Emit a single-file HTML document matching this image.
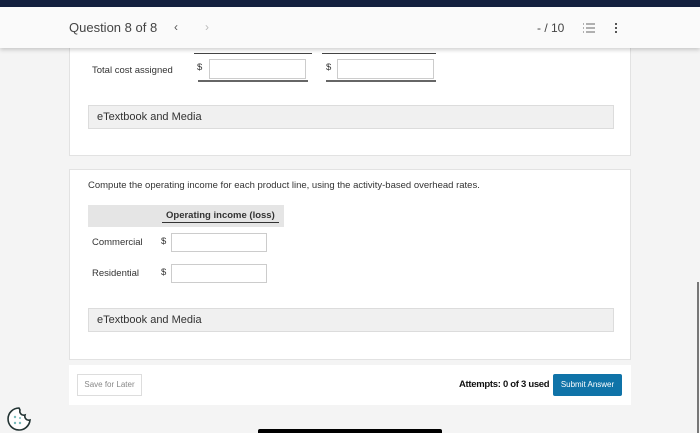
<!DOCTYPE html>
<html><head><style>
*{box-sizing:border-box;margin:0;padding:0}
body{width:700px;height:433px;overflow:hidden;background:#f4f4f4;font-family:"Liberation Sans",sans-serif;position:relative;color:#333}
.top{position:absolute;left:0;top:0;width:700px;height:7px;background:#14203f}
.hdr{position:absolute;left:0;top:7px;width:700px;height:41px;background:#fafafa;box-shadow:0 2px 4px rgba(0,0,0,.18);z-index:2}
.hdr .t{position:absolute;left:69px;top:13px;font-size:13px;color:#444}
.card{position:absolute;left:69px;width:562px;background:#fff;border:1px solid #e2e2e2}
.etb{position:absolute;left:18px;width:526px;height:24px;background:#f0f0f0;border:1px solid #dcdcdc;font-size:11px;padding:5px 8px;color:#333}
.inp{position:absolute;background:#fff;border:1px solid #ccc}
.lbl{position:absolute;font-size:9.5px;color:#333}
</style></head><body>
<div class="top"></div>
<div class="hdr">
<div class="t">Question 8 of 8</div>
<div style="position:absolute;left:174px;top:13px;font-size:12px;color:#555">‹</div>
<div style="position:absolute;left:205px;top:13px;font-size:12px;color:#bbb">›</div>
<div style="position:absolute;left:537px;top:14px;font-size:12px;color:#444">- / 10</div>
<svg style="position:absolute;left:583px;top:16px" width="12" height="10"><g stroke="#666" stroke-width="1"><line x1="0" y1="1" x2="1" y2="1"/><line x1="0" y1="5" x2="1" y2="5"/><line x1="0" y1="9" x2="1" y2="9"/><line x1="3" y1="1" x2="12" y2="1"/><line x1="3" y1="5" x2="12" y2="5"/><line x1="3" y1="9" x2="12" y2="9"/></g></svg>
<div style="position:absolute;left:615px;top:15px;width:2px;height:11px;background:radial-gradient(circle,#555 50%,transparent 55%) 0 0/2px 4px repeat-y"></div>
</div>
<div class="card" style="top:40px;height:116px">
<div style="position:absolute;left:124px;top:12px;width:118px;height:1px;background:#444"></div>
<div style="position:absolute;left:252px;top:12px;width:114px;height:1px;background:#444"></div>
<div class="lbl" style="left:22px;top:24px">Total cost assigned</div>
<div class="lbl" style="left:127px;top:21px">$</div>
<div class="inp" style="left:139px;top:18px;width:97px;height:20px"></div>
<div style="position:absolute;left:128px;top:39px;width:110px;height:2px;background:#666"></div>
<div class="lbl" style="left:256px;top:21px">$</div>
<div class="inp" style="left:267px;top:18px;width:97px;height:20px"></div>
<div style="position:absolute;left:256px;top:39px;width:110px;height:2px;background:#666"></div>
<div class="etb" style="top:64px">eTextbook and Media</div>
</div>
<div class="card" style="top:169px;height:191px">
<div style="position:absolute;left:18px;top:10px;font-size:9.5px">Compute the operating income for each product line, using the activity-based overhead rates.</div>
<div style="position:absolute;left:18px;top:35px;width:196px;height:22px;background:#e5e5e5"></div>
<div style="position:absolute;left:92px;top:40px;font-size:9.5px;font-weight:bold;border-bottom:1px solid #333;padding:0 4px 1px 4px">Operating income (loss)</div>
<div class="lbl" style="left:22px;top:67px">Commercial</div>
<div class="lbl" style="left:91px;top:66px">$</div>
<div class="inp" style="left:101px;top:63px;width:96px;height:19px"></div>
<div class="lbl" style="left:22px;top:98px">Residential</div>
<div class="lbl" style="left:91px;top:97px">$</div>
<div class="inp" style="left:101px;top:94px;width:96px;height:19px"></div>
<div class="etb" style="top:138px">eTextbook and Media</div>
</div>
<div style="position:absolute;left:69px;top:365px;width:562px;height:40px;background:#fff"></div>
<div style="position:absolute;left:77px;top:374px;width:65px;height:22px;border:1px solid #ddd;background:#fff;font-size:8px;color:#888;text-align:center;line-height:20px">Save for Later</div>
<div style="position:absolute;left:459px;top:379px;font-size:9.5px;color:#111;font-weight:bold;letter-spacing:-0.3px">Attempts: 0 of 3 used</div>
<div style="position:absolute;left:553px;top:374px;width:69px;height:22px;background:#0f73a8;border-radius:2px;font-size:8px;color:#fff;text-align:center;line-height:22px">Submit Answer</div>
<svg style="position:absolute;left:6px;top:406px" width="26" height="26" viewBox="0 0 26 26"><path d="M13 2 A11 11 0 1 0 24 14 A4 4 0 0 1 19 9 A4 4 0 0 1 14 4 Z" fill="#fff" stroke="#233" stroke-width="1.6"/><circle cx="9" cy="11" r="1.2" fill="#7bb"/><circle cx="9" cy="17" r="1.2" fill="#7bb"/><circle cx="14" cy="17" r="1.2" fill="#7bb"/><circle cx="14" cy="12" r="1" fill="#7bb"/></svg>
<div style="position:absolute;left:258px;top:429px;width:184px;height:4px;background:#000;border-radius:2px 2px 0 0"></div>
<div style="position:absolute;left:697px;top:282px;width:2px;height:151px;background:#777"></div>
</body></html>
